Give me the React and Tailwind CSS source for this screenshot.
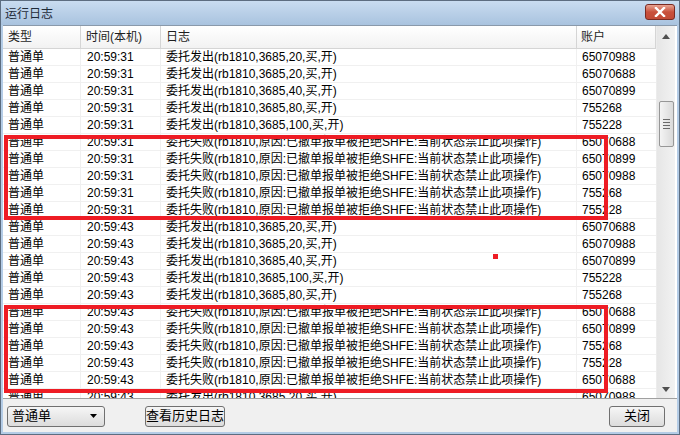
import React from "react";

const FONT = { fontFamily: '"Liberation Sans", "Noto Sans CJK SC", sans-serif' };

const FAIL = "委托失败(rb1810,原因:已撤单报单被拒绝SHFE:当前状态禁止此项操作)";

const rows = [
  ["20:59:31", "委托发出(rb1810,3685,20,买,开)", "65070988"],
  ["20:59:31", "委托发出(rb1810,3685,20,买,开)", "65070688"],
  ["20:59:31", "委托发出(rb1810,3685,40,买,开)", "65070899"],
  ["20:59:31", "委托发出(rb1810,3685,80,买,开)", "755268"],
  ["20:59:31", "委托发出(rb1810,3685,100,买,开)", "755228"],
  ["20:59:31", FAIL, "65070688"],
  ["20:59:31", FAIL, "65070899"],
  ["20:59:31", FAIL, "65070988"],
  ["20:59:31", FAIL, "755268"],
  ["20:59:31", FAIL, "755228"],
  ["20:59:43", "委托发出(rb1810,3685,20,买,开)", "65070688"],
  ["20:59:43", "委托发出(rb1810,3685,20,买,开)", "65070988"],
  ["20:59:43", "委托发出(rb1810,3685,40,买,开)", "65070899"],
  ["20:59:43", "委托发出(rb1810,3685,100,买,开)", "755228"],
  ["20:59:43", "委托发出(rb1810,3685,80,买,开)", "755268"],
  ["20:59:43", FAIL, "65070688"],
  ["20:59:43", FAIL, "65070899"],
  ["20:59:43", FAIL, "755268"],
  ["20:59:43", FAIL, "755228"],
  ["20:59:43", FAIL, "65070688"],
  ["20:59:43", "委托发出(rb1810,3685,20,买,开)", "65070988"],
];

function Row({ time, msg, acct }) {
  return (
    <div className="flex h-[17px] shrink-0 border-b border-[#f0f0f0] leading-[16px]">
      <div className="w-[78px] pl-[5px] border-r border-[#f0f0f0]">普通单</div>
      <div className="w-[80px] pl-[6px] border-r border-[#f0f0f0]">{time}</div>
      <div className="w-[416px] pl-[5px] border-r border-[#f0f0f0] whitespace-nowrap overflow-hidden">{msg}</div>
      <div className="w-[79px] pl-[5px]">{acct}</div>
    </div>
  );
}

function Button({ children, className }) {
  return (
    <div
      className={`h-[21px] flex items-center justify-center rounded-[3px] border border-[#707070] bg-gradient-to-b from-[#f6f6f6] to-[#dcdcdc] ${className}`}
    >
      {children}
    </div>
  );
}

export default function App() {
  return (
    <div
      className="w-[680px] h-[435px] flex flex-col bg-[#b4cce6] border border-[#5d6d80] text-[12px] text-black relative overflow-hidden"
      style={FONT}
    >
      {/* Title bar */}
      <div className="h-[24px] shrink-0 flex items-center justify-between pl-[4px] pr-[4px] bg-gradient-to-b from-[#c9dcf0] to-[#a9c3df]">
        <span className="text-[12px] text-[#1e2a38] mt-[1px]">运行日志</span>
        <div className="w-[30px] h-[16px] mb-[2px] rounded-[3px] border border-[#7a2a22] bg-gradient-to-b from-[#e8a493] via-[#c8503c] to-[#c24a36] flex items-center justify-center">
          <svg width="12" height="10" viewBox="0 0 12 10">
            <path d="M2 1 L10 9 M10 1 L2 9" stroke="#fff" strokeWidth="2.4" strokeLinecap="square" />
          </svg>
        </div>
      </div>

      {/* Client area */}
      <div className="flex-1 mx-[2px] mb-[2px] flex flex-col bg-[#f0f0f0] border-t border-[#8a99aa]">
        <div className="h-[372px] shrink-0 flex bg-white">
          {/* list */}
          <div className="w-[653px] flex flex-col overflow-hidden">
            <div className="h-[23px] shrink-0 flex bg-gradient-to-b from-[#ffffff] to-[#f2f2f2] border-b border-[#d5d5d5] leading-[22px] text-[#1e1e1e]">
              <div className="w-[78px] pl-[5px] border-r border-[#d5d5d5]">类型</div>
              <div className="w-[80px] pl-[5px] border-r border-[#d5d5d5]">时间(本机)</div>
              <div className="w-[416px] pl-[5px] border-r border-[#d5d5d5]">日志</div>
              <div className="w-[79px] pl-[4px] border-r border-[#d5d5d5]">账户</div>
            </div>
            {rows.map((r, i) => (
              <Row key={i} time={r[0]} msg={r[1]} acct={r[2]} />
            ))}
          </div>
          {/* scrollbar */}
          <div className="w-[19px] flex flex-col items-center bg-gradient-to-r from-[#e6e6e6] to-[#f2f2f2] border-l border-[#ececec]">
            <div className="h-[17px] w-full flex items-center justify-center mt-[2px]">
              <svg width="8" height="5" viewBox="0 0 8 5"><path d="M0 5 L4 0 L8 5 Z" fill="#505050" /></svg>
            </div>
            <div className="mt-[56px] w-[15px] h-[46px] rounded-[2px] border border-[#979797] bg-gradient-to-r from-[#f4f4f4] to-[#dadada] flex flex-col items-center justify-center gap-[2px]">
              <div className="w-[7px] h-[1px] bg-[#6a6a6a]" />
              <div className="w-[7px] h-[1px] bg-[#6a6a6a]" />
              <div className="w-[7px] h-[1px] bg-[#6a6a6a]" />
              <div className="w-[7px] h-[1px] bg-[#6a6a6a]" />
            </div>
            <div className="flex-1" />
            <div className="h-[17px] w-full flex items-center justify-center">
              <svg width="8" height="5" viewBox="0 0 8 5"><path d="M0 0 L4 5 L8 0 Z" fill="#505050" /></svg>
            </div>
          </div>
        </div>

        {/* bottom bar */}
        <div className="flex-1 flex items-center px-[4px] border-t border-[#a0a0a0] pt-[1px]">
          <div className="w-[98px] h-[21px] rounded-[3px] border border-[#707070] bg-gradient-to-b from-[#f6f6f6] to-[#dcdcdc] flex items-center justify-between pl-[4px] pr-[7px] text-[13px]">
            <span>普通单</span>
            <svg width="7" height="4" viewBox="0 0 7 4"><path d="M0 0 L3.5 4 L7 0 Z" fill="#000" /></svg>
          </div>
          <Button className="ml-[40px] w-[80px] text-[13px]">查看历史日志</Button>
          <div className="flex-1" />
          <Button className="w-[56px] mr-[8px] text-[13px]">关闭</Button>
        </div>
      </div>

      {/* annotation overlays */}
      <div className="absolute left-[3px] top-[134px] w-[604px] h-[85px] border-[4px] border-[#ee1c24] pointer-events-none" />
      <div className="absolute left-[3px] top-[304px] w-[604px] h-[88px] border-[4px] border-[#ee1c24] pointer-events-none" />
      <div className="absolute left-[492px] top-[253px] w-[5px] h-[5px] bg-[#ee1c24]" />
    </div>
  );
}
